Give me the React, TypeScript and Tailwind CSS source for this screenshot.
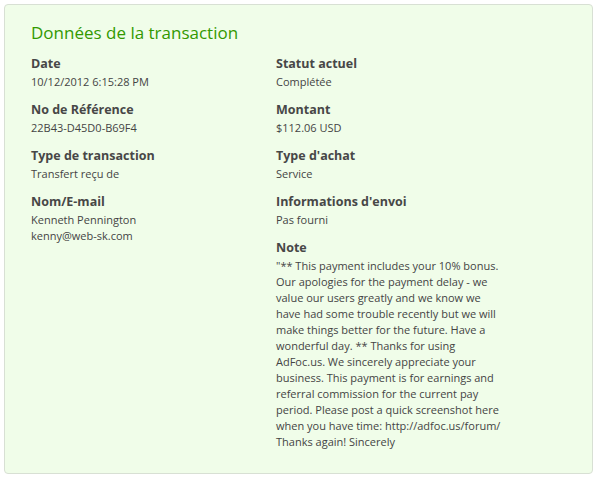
import React from 'react';

type Field = { label: string; lines: string[] };

const left: Field[] = [
  { label: 'Date', lines: ['10/12/2012 6:15:28 PM'] },
  { label: 'No de Référence', lines: ['22B43-D45D0-B69F4'] },
  { label: 'Type de transaction', lines: ['Transfert reçu de'] },
  { label: 'Nom/E-mail', lines: ['Kenneth Pennington', 'kenny@web-sk.com'] },
];

const right: Field[] = [
  { label: 'Statut actuel', lines: ['Complétée'] },
  { label: 'Montant', lines: ['$112.06 USD'] },
  { label: "Type d'achat", lines: ['Service'] },
  { label: "Informations d'envoi", lines: ['Pas fourni'] },
];

const note =
  '"** This payment includes your 10% bonus. Our apologies for the payment delay - we value our users greatly and we know we have had some trouble recently but we will make things better for the future. Have a wonderful day. ** Thanks for using AdFoc.us. We sincerely appreciate your business. This payment is for earnings and referral commission for the current pay period. Please post a quick screenshot here when you have time: http://adfoc.us/forum/ Thanks again! Sincerely';

function Item({ field }: { field: Field }) {
  return (
    <div className="mb-[11px]">
      <div className="text-[12.5px] leading-[18px] font-bold text-[#474747]">{field.label}</div>
      <div className="mt-[1px] text-[11px] leading-[16px] text-[#444]">
        {field.lines.map((l) => (
          <div key={l}>{l}</div>
        ))}
      </div>
    </div>
  );
}

export default function App() {
  return (
    <div className="w-[602px] h-[481px] bg-white p-[4px] pr-[9px] pb-[7px]" style={{ fontFamily: '"Open Sans", "Noto Sans", sans-serif' }}>
      <div className="h-full rounded-[4px] border border-[#d8e0d4] bg-[#f0fde9] pl-[26px] pt-[16px]">
        <h2 className="text-[17px] leading-[24px] text-[#339900]">Données de la transaction</h2>
        <div className="mt-[10px] flex">
          <div className="w-[245px]">
            {left.map((f) => (
              <Item key={f.label} field={f} />
            ))}
          </div>
          <div className="w-[228px]">
            {right.map((f) => (
              <Item key={f.label} field={f} />
            ))}
            <div>
              <div className="text-[12.5px] leading-[18px] font-bold text-[#474747]">Note</div>
              <p className="mt-[1px] text-[11px] leading-[16px] text-[#444]">{note}</p>
            </div>
          </div>
        </div>
      </div>
    </div>
  );
}
